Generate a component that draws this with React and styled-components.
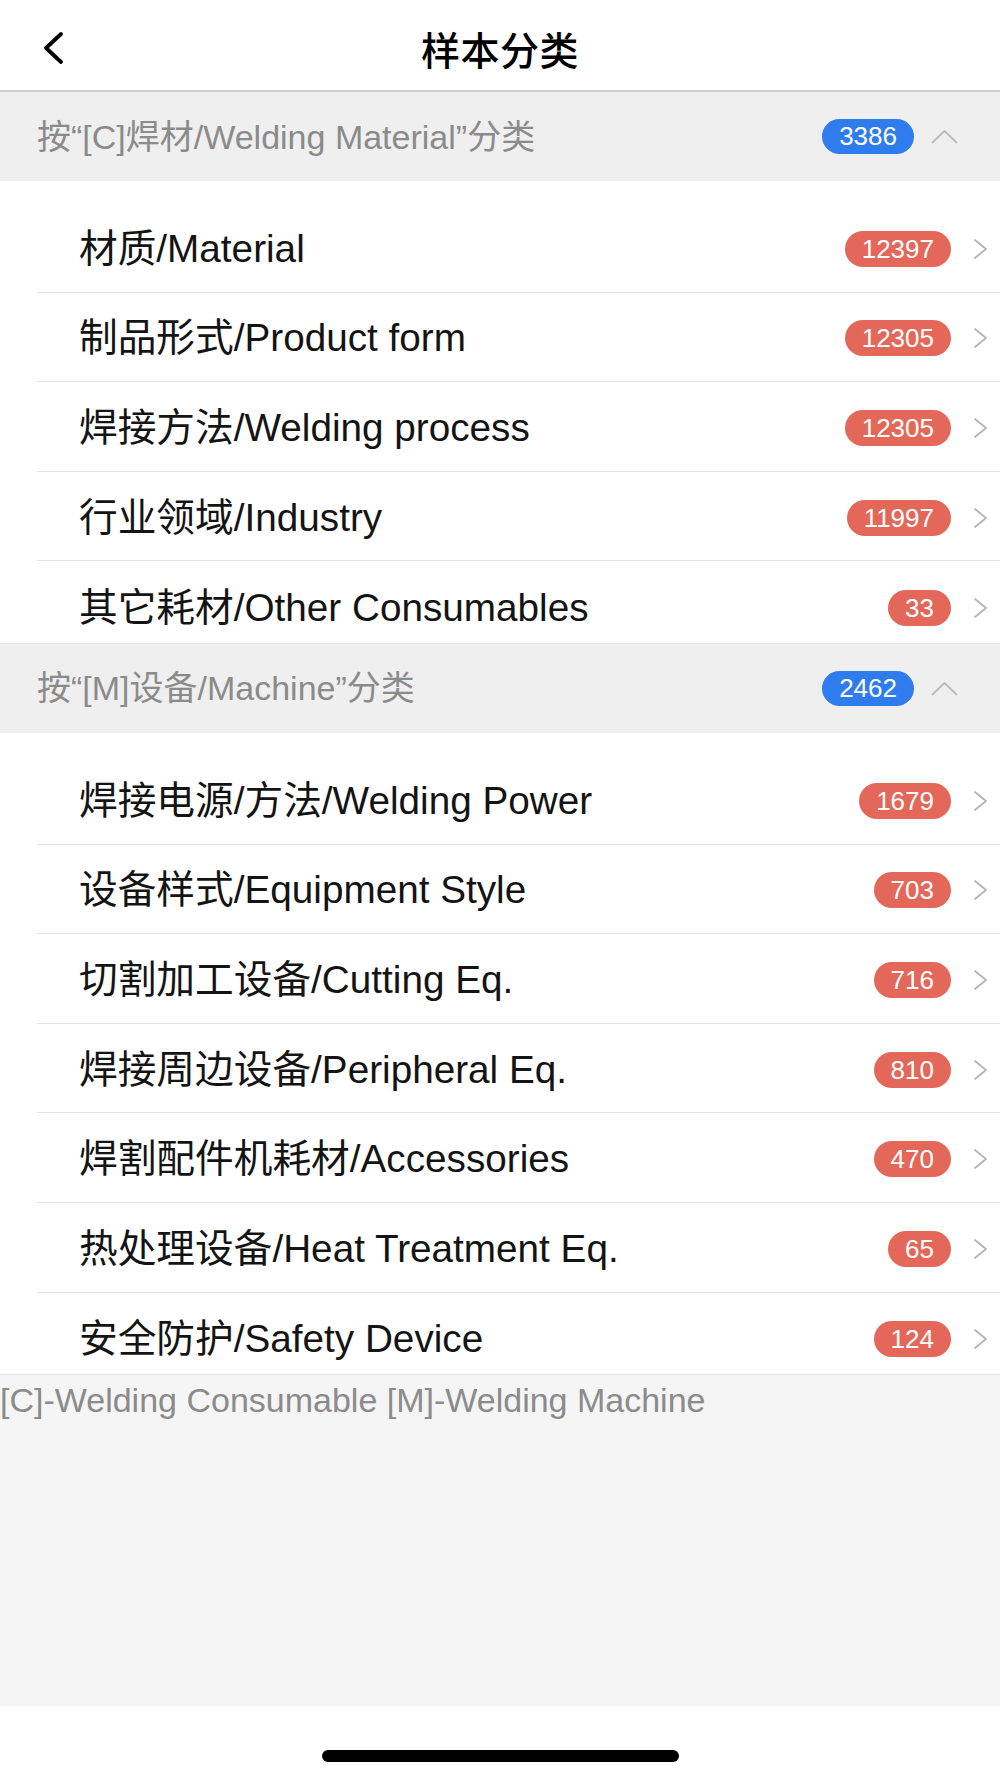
import React from "react";
import styled, { createGlobalStyle } from "styled-components";

const GlobalStyle = createGlobalStyle`
  html, body { margin: 0; padding: 0; background: #ffffff; }
  body {
    font-family: "Liberation Sans", "Noto Sans CJK SC", Arial, sans-serif;
    -webkit-font-smoothing: antialiased;
  }
  * { box-sizing: border-box; }
`;

const Page = styled.div`
  width: 1000px;
  min-height: 1778px;
  display: flex;
  flex-direction: column;
  background: #ffffff;
`;

const NavBar = styled.header`
  height: 92px;
  padding-top: 6px;
  border-bottom: 2px solid #cfcfcf;
  display: grid;
  grid-template-columns: 120px 1fr 120px;
  align-items: center;
`;

const BackButton = styled.button`
  border: 0;
  background: transparent;
  padding: 0 0 0 41px;
  height: 40px;
  display: flex;
  align-items: center;
  justify-content: flex-start;
  cursor: pointer;
`;

const Title = styled.h1`
  margin: 0;
  text-align: center;
  font-size: 39px;
  font-weight: 500;
  color: #000;
  letter-spacing: 0.5px;
  line-height: 48px;
  font-family: "Noto Sans CJK SC", "Liberation Sans", sans-serif;
`;

const SectionHeader = styled.div`
  height: 89px;
  background: #efefef;
  display: flex;
  align-items: center;
  padding: 0 42px 0 37px;
`;

const SectionTitle = styled.span`
  flex: 1;
  font-size: 34px;
  color: #8b8b8b;
  line-height: 40px;
  white-space: nowrap;
`;

const Badge = styled.span`
  height: ${(p) => (p.$tone === "blue" ? 35 : 36)}px;
  min-width: 36px;
  padding: 0 17px;
  border-radius: 18px;
  background: ${(p) => (p.$tone === "blue" ? "#2f7cee" : "#e4685a")};
  color: #ffffff;
  font-size: 26px;
  line-height: ${(p) => (p.$tone === "blue" ? 35 : 36)}px;
  display: inline-flex;
  align-items: center;
  justify-content: center;
  margin-right: ${(p) => (p.$tone === "blue" ? 17 : 22)}px;
`;

const List = styled.ul`
  list-style: none;
  margin: 0;
  padding: 22px 0 0 37px;
  border-bottom: 1px solid #e3e3e3;
`;

const Row = styled.li`
  height: 89.6px;
  display: flex;
  align-items: center;
  padding: 3px 12px 0 42px;
  border-bottom: 1px solid #e2e2e2;
  &:last-child {
    border-bottom: 0;
    height: 81.6px;
    padding-top: 12px;
  }
`;

const RowLabel = styled.span`
  flex: 1;
  font-size: 38.7px;
  color: #141414;
  line-height: 44px;
  white-space: nowrap;
`;

const Footer = styled.div`
  flex: 1;
  background: #f5f5f5;
  padding-top: 5px;
  min-height: 330px;
`;

const Legend = styled.p`
  margin: 0;
  font-size: 34px;
  line-height: 40px;
  color: #8b8b8b;
  white-space: nowrap;
`;

const HomeArea = styled.div`
  height: 72px;
  background: #ffffff;
  display: flex;
  justify-content: center;
  padding-top: 44px;
`;

const HomeBar = styled.div`
  width: 357px;
  height: 12px;
  border-radius: 6px;
  background: #000;
`;

const BackIcon = () => (
  <svg width="24" height="34" viewBox="0 0 24 34">
    <path d="M20 3 L5 17 L20 31" fill="none" stroke="#000" strokeWidth="3.8" strokeLinecap="round" strokeLinejoin="round" />
  </svg>
);

const ChevronRight = () => (
  <svg width="15" height="22" viewBox="0 0 15 22">
    <path d="M2 2 L13 11 L2 20" fill="none" stroke="#b5b5b5" strokeWidth="1.8" strokeLinecap="round" strokeLinejoin="round" />
  </svg>
);

const ChevronUp = () => (
  <svg width="27" height="15" viewBox="0 0 27 15">
    <path d="M1.5 13.5 L13.5 2 L25.5 13.5" fill="none" stroke="#bababa" strokeWidth="1.8" strokeLinecap="round" strokeLinejoin="round" />
  </svg>
);

const sections = [
  {
    title: "按“[C]焊材/Welding Material”分类",
    count: 3386,
    items: [
      ["材质/Material", 12397],
      ["制品形式/Product form", 12305],
      ["焊接方法/Welding process", 12305],
      ["行业领域/Industry", 11997],
      ["其它耗材/Other Consumables", 33],
    ],
  },
  {
    title: "按“[M]设备/Machine”分类",
    count: 2462,
    items: [
      ["焊接电源/方法/Welding Power", 1679],
      ["设备样式/Equipment Style", 703],
      ["切割加工设备/Cutting Eq.", 716],
      ["焊接周边设备/Peripheral Eq.", 810],
      ["焊割配件机耗材/Accessories", 470],
      ["热处理设备/Heat Treatment Eq.", 65],
      ["安全防护/Safety Device", 124],
    ],
  },
];

export default function App() {
  return (
    <>
      <GlobalStyle />
      <Page>
        <NavBar>
          <BackButton aria-label="back">
            <BackIcon />
          </BackButton>
          <Title>样本分类</Title>
          <span />
        </NavBar>
        {sections.map((s) => (
          <section key={s.title}>
            <SectionHeader>
              <SectionTitle>{s.title}</SectionTitle>
              <Badge $tone="blue">{s.count}</Badge>
              <ChevronUp />
            </SectionHeader>
            <List>
              {s.items.map(([label, n]) => (
                <Row key={label}>
                  <RowLabel>{label}</RowLabel>
                  <Badge>{n}</Badge>
                  <ChevronRight />
                </Row>
              ))}
            </List>
          </section>
        ))}
        <Footer>
          <Legend>[C]-Welding Consumable [M]-Welding Machine</Legend>
        </Footer>
        <HomeArea>
          <HomeBar />
        </HomeArea>
      </Page>
    </>
  );
}
